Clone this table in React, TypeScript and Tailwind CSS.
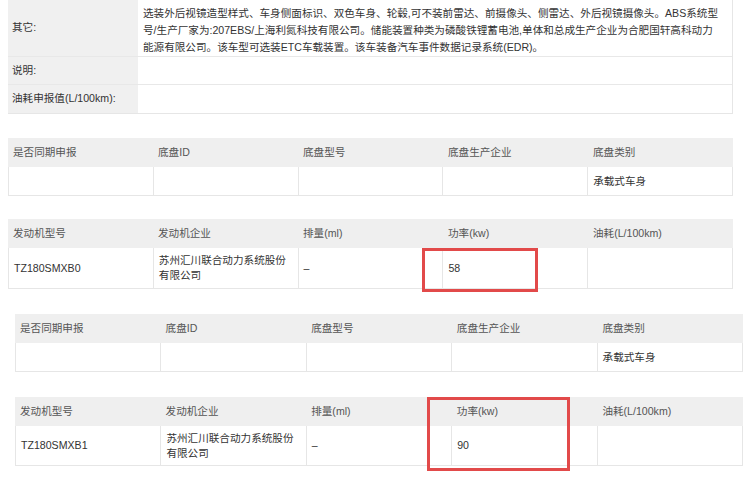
import React from "react";

const font = { fontFamily: '"Liberation Sans", "Noto Sans CJK SC", sans-serif' };

const otherLines = [
  "选装外后视镜造型样式、车身侧面标识、双色车身、轮毂,可不装前雷达、前摄像头、侧雷达、外后视镜摄像头。ABS系统型",
  "号/生产厂家为:207EBS/上海利氮科技有限公司。储能装置种类为磷酸铁锂蓄电池,单体和总成生产企业为合肥国轩高科动力",
  "能源有限公司。该车型可选装ETC车载装置。该车装备汽车事件数据记录系统(EDR)。",
];

function InfoTable() {
  return (
    <div className="ml-[8px] w-[725px] border-r border-b border-[#e6e6e6] text-[10.6px] text-[#333]">
      <div className="flex h-[57px] border-b border-[#e8e8e8]">
        <div className="w-[130px] shrink-0 bg-[#f0f0f0] pl-[4px] flex items-center">其它:</div>
        <div className="flex-1 pl-[5px] pt-[5px] leading-[17px]">
          {otherLines.map((l) => (
            <div key={l} className="whitespace-nowrap">{l}</div>
          ))}
        </div>
      </div>
      <div className="flex h-[28px] border-b border-[#e8e8e8]">
        <div className="w-[130px] shrink-0 bg-[#f0f0f0] pl-[4px] flex items-center">说明:</div>
        <div className="flex-1" />
      </div>
      <div className="flex h-[28px]">
        <div className="w-[130px] shrink-0 bg-[#f0f0f0] pl-[4px] flex items-center">油耗申报值(L/100km):</div>
        <div className="flex-1" />
      </div>
    </div>
  );
}

function GridTable({
  headers,
  cells,
  bodyH,
  className,
  children,
}: {
  headers: string[];
  cells: React.ReactNode[];
  bodyH: string;
  className: string;
  children?: React.ReactNode;
}) {
  return (
    <div className={`relative text-[10.6px] ${className}`}>
      <div className="grid grid-cols-5 h-[29px] bg-[#efefef] text-[#555]">
        {headers.map((h) => (
          <div key={h} className="flex items-center pl-[5px]">{h}</div>
        ))}
      </div>
      <div className={`grid grid-cols-5 ${bodyH} border-l border-b border-[#e6e6e6] text-[#333]`}>
        {cells.map((c, i) => (
          <div key={i} className="flex items-center pl-[5px] border-r border-[#e6e6e6] leading-[15px]">
            {c}
          </div>
        ))}
      </div>
      {children}
    </div>
  );
}

const chassisHeaders = ["是否同期申报", "底盘ID", "底盘型号", "底盘生产企业", "底盘类别"];
const engineHeaders = ["发动机型号", "发动机企业", "排量(ml)", "功率(kw)", "油耗(L/100km)"];

const company = (
  <div>
    <div>苏州汇川联合动力系统股份</div>
    <div>有限公司</div>
  </div>
);

export default function App() {
  return (
    <div className="w-[750px] h-[478px] overflow-hidden bg-white" style={font}>
      <InfoTable />
      <GridTable
        className="mt-[24px] ml-[8px] w-[725px]"
        headers={chassisHeaders}
        cells={["", "", "", "", "承载式车身"]}
        bodyH="h-[29px]"
      />
      <GridTable
        className="mt-[23px] ml-[8px] w-[725px]"
        headers={engineHeaders}
        cells={["TZ180SMXB0", company, "–", "58", ""]}
        bodyH="h-[41px]"
      >
        <div className="absolute left-[414px] top-[29px] w-[116px] h-[44px] border-[3px] border-[#e24a4a]" />
      </GridTable>
      <GridTable
        className="mt-[25px] ml-[15px] w-[728px]"
        headers={chassisHeaders}
        cells={["", "", "", "", "承载式车身"]}
        bodyH="h-[29px]"
      />
      <GridTable
        className="mt-[25px] ml-[15px] w-[728px]"
        headers={engineHeaders}
        cells={["TZ180SMXB1", company, "–", "90", ""]}
        bodyH="h-[40px]"
      >
        <div className="absolute left-[412px] top-0 w-[143px] h-[74px] border-[3px] border-[#e24a4a]" />
      </GridTable>
    </div>
  );
}
